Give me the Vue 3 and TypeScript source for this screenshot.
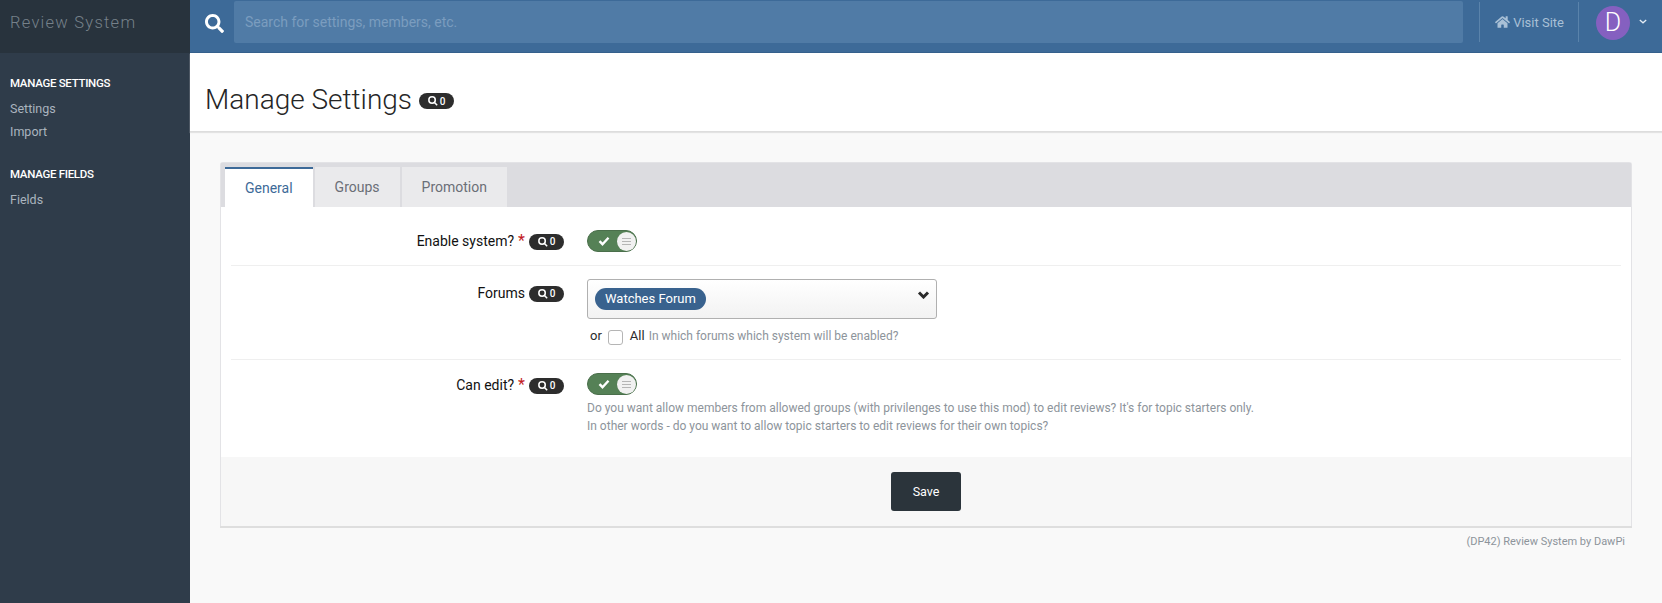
<template>
  <div class="page">
    <aside class="sidebar">
      <div class="brand">Review System</div>
      <nav class="menu">
        <section v-for="group in menu" :key="group.title" class="menu-group">
          <h4>{{ group.title }}</h4>
          <a v-for="link in group.links" :key="link">{{ link }}</a>
        </section>
      </nav>
    </aside>

    <div class="main">
      <header class="topbar">
        <svg class="search-icon" viewBox="0 0 512 512"><path d="M505 442.700L405.300 343c-4.500-4.500-10.600-7-17-7H372c27.600-35.300 44-79.700 44-128C416 93.100 322.900 0 208 0S0 93.100 0 208s93.100 208 208 208c48.300 0 92.700-16.400 128-44v16.300c0 6.400 2.500 12.500 7 17l99.700 99.700c9.400 9.400 24.600 9.400 33.900 0l28.300-28.300c9.400-9.400 9.400-24.600.1-34zM208 336c-70.700 0-128-57.200-128-128 0-70.700 57.200-128 128-128 70.700 0 128 57.200 128 128 0 70.700-57.200 128-128 128z"/></svg>
        <div class="search">Search for settings, members, etc.</div>
        <a class="visit">
          <svg viewBox="0 0 576 512"><path d="M280.400 148.300L96 300.100V464a16 16 0 0 0 16 16l112.100-.3a16 16 0 0 0 15.900-16V368a16 16 0 0 1 16-16h64a16 16 0 0 1 16 16v95.600a16 16 0 0 0 16 16.100L464 480a16 16 0 0 0 16-16V300L295.700 148.300a12.200 12.200 0 0 0-15.300 0zM571.600 251.500L488 182.600V44.100a12 12 0 0 0-12-12h-56a12 12 0 0 0-12 12v72.600L318.500 43a48 48 0 0 0-61 0L4.300 251.500a12 12 0 0 0-1.600 16.900l25.500 31A12 12 0 0 0 45.200 301l235.200-193.700a12.200 12.200 0 0 1 15.300 0L530.900 301a12 12 0 0 0 16.900-1.600l25.500-31a12 12 0 0 0-1.700-16.900z"/></svg>
          Visit Site
        </a>
        <div class="user">
          <span class="avatar">D</span>
          <svg class="caret" viewBox="0 0 10 6"><path d="M1 1l4 3.600L9 1" /></svg>
        </div>
      </header>

      <div class="title-bar">
        <h1>Manage Settings</h1>
        <span class="hits title-hits">
          <svg viewBox="0 0 512 512"><circle cx="208" cy="208" r="165" /><path d="M330 330l140 140" /></svg>0
        </span>
      </div>

      <main class="content">
        <div class="panel">
          <div class="tabs">
            <a v-for="tab in tabs" :key="tab" class="tab" :class="{ active: tab === 'General' }">{{ tab }}</a>
          </div>

          <div class="form">
            <div class="row">
              <div class="label">
                Enable system?
                <span class="req">*</span>
                <span class="hits"><svg viewBox="0 0 512 512"><circle cx="208" cy="208" r="165" /><path d="M330 330l140 140" /></svg>0</span>
              </div>
              <div class="field">
                <div class="toggle">
                  <svg class="check" viewBox="0 0 12 10"><path d="M1.500 5.200l3 3 6-6.400" /></svg>
                  <span class="knob"><i></i></span>
                </div>
              </div>
            </div>

            <div class="row row-forums">
              <div class="label">
                Forums
                <span class="hits"><svg viewBox="0 0 512 512"><circle cx="208" cy="208" r="165" /><path d="M330 330l140 140" /></svg>0</span>
              </div>
              <div class="field">
                <div class="select">
                  <span class="token">Watches Forum</span>
                  <svg class="select-arrow" viewBox="0 0 13 8"><path d="M2 1.500L6.500 6 11 1.500" /></svg>
                </div>
                <div class="unlimited">
                  <span>or</span>
                  <span class="checkbox"></span>
                  <span>All</span>
                  <span class="help">In which forums which system will be enabled?</span>
                </div>
              </div>
            </div>

            <div class="row row-edit">
              <div class="label">
                Can edit?
                <span class="req">*</span>
                <span class="hits"><svg viewBox="0 0 512 512"><circle cx="208" cy="208" r="165" /><path d="M330 330l140 140" /></svg>0</span>
              </div>
              <div class="field">
                <div class="toggle">
                  <svg class="check" viewBox="0 0 12 10"><path d="M1.500 5.200l3 3 6-6.400" /></svg>
                  <span class="knob"><i></i></span>
                </div>
                <p class="help desc">
                  Do you want allow members from allowed groups (with privilenges to use this mod) to edit reviews? It's for topic starters only.<br />
                  In other words - do you want to allow topic starters to edit reviews for their own topics?
                </p>
              </div>
            </div>
          </div>

          <div class="actions">
            <button class="save">Save</button>
          </div>
        </div>
        <div class="credit">(DP42) Review System by DawPi</div>
      </main>
    </div>
  </div>
</template>

<script setup lang="ts">
const menu = [
  { title: "MANAGE SETTINGS", links: ["Settings", "Import"] },
  { title: "MANAGE FIELDS", links: ["Fields"] },
]
const tabs = ["General", "Groups", "Promotion"]
</script>

<style>
html,
body {
  margin: 0;
  height: 100%;
}
</style>

<style scoped>
.page {
  display: flex;
  height: 603px;
  overflow: hidden;
  font-family: Roboto, "Liberation Sans", sans-serif;
  font-size: 13px;
  color: #111;
  background: #f9f9f9;
}

.sidebar {
  width: 190px;
  flex: none;
  background: #2f3c4a;
}
.brand {
  height: 53px;
  box-sizing: border-box;
  padding: 13px 10px 0;
  background: #28333d;
  color: #76818a;
  font-size: 16.500px;
  font-weight: 300;
  letter-spacing: 1.250px;
  line-height: 20px;
}
.menu {
  padding-top: 23px;
}
.menu-group {
  margin-bottom: 24px;
}
.menu-group h4 {
  margin: 0 0 7px;
  padding: 0 10px;
  color: #fff;
  font-size: 11.500px;
  font-weight: 500;
  letter-spacing: -0.300px;
  line-height: 14px;
}
.menu-group a {
  display: block;
  padding: 0 10px;
  color: #aab4bf;
  font-size: 12.500px;
  line-height: 23px;
}

.main {
  flex: 1;
  min-width: 0;
  display: flex;
  flex-direction: column;
}

.topbar {
  height: 53px;
  flex: none;
  box-sizing: border-box;
  padding-bottom: 9px;
  display: flex;
  align-items: center;
  background: #3d6a98;
  box-shadow: inset 0 -1px 0 #35608c;
}
.search-icon {
  width: 19px;
  height: 19px;
  margin: 3px 0 0 15px;
  fill: #fff;
  flex: none;
}
.search {
  flex: 1;
  height: 42px;
  margin: 0 16px 0 10px;
  padding-left: 11px;
  border-radius: 2px;
  background: #507ba6;
  color: #7b9dbf;
  font-size: 14px;
  line-height: 42px;
}
.visit {
  display: flex;
  align-items: center;
  gap: 3px;
  height: 40px;
  padding: 0 14px 0 15px;
  border-left: 1px solid #5a83ab;
  border-right: 1px solid #5a83ab;
  color: #a9c0d6;
  font-size: 13px;
}
.visit svg {
  width: 15px;
  height: 14px;
  fill: #a9c0d6;
}
.user {
  display: flex;
  align-items: center;
  margin-top: 2px;
  padding: 0 15px 0 17px;
}
.avatar {
  width: 34px;
  height: 34px;
  border-radius: 50%;
  background: #8560c0;
  color: #fff;
  font-size: 25px;
  font-weight: 300;
  line-height: 34px;
  text-align: center;
}
.caret {
  width: 8px;
  height: 5px;
  margin: 0 0 3px 9px;
  fill: none;
  stroke: #e5edf5;
  stroke-width: 1.600;
}

.title-bar {
  height: 79px;
  flex: none;
  box-sizing: border-box;
  display: flex;
  align-items: center;
  gap: 7px;
  padding: 14px 0 0 15px;
  background: #fff;
  border-bottom: 1px solid #ddd;
  box-shadow: 0 1px 1px #e3e3e3;
}
.title-bar h1 {
  margin: 0;
  font-size: 28px;
  font-weight: 300;
  color: #262626;
}

.hits {
  display: inline-flex;
  align-items: center;
  justify-content: center;
  gap: 2px;
  width: 35px;
  height: 16px;
  border-radius: 8px;
  background: #2d2d2d;
  color: #fff;
  font-size: 10px;
  font-weight: 500;
}
.hits svg {
  width: 10px;
  height: 10px;
  fill: none;
  stroke: #fff;
  stroke-width: 78;
}
.title-hits {
  margin-top: 4px;
}

.content {
  flex: 1;
  padding: 30px 30px 0;
}
.panel {
  border-radius: 3px 3px 0 0;
  border: 1px solid #e3e3e6;
  border-bottom: 0;
  background: #fff;
  box-shadow: 0 2px 0 #dedede;
}
.tabs {
  display: flex;
  gap: 2px;
  height: 44px;
  box-sizing: border-box;
  padding: 4px 0 0 4px;
  background: #dcdce0;
}
.tab {
  padding: 0 20px;
  line-height: 41px;
  height: 40px;
  font-size: 14px;
  color: #6a6f77;
  background: #eaeaec;
}
.tab.active {
  box-sizing: border-box;
  line-height: 39px;
  color: #3d6a98;
  background: #fff;
  border-top: 2px solid #3d6a98;
}

.form {
  padding: 0 10px;
}
.row {
  display: flex;
  gap: 23px;
  box-sizing: border-box;
  height: 59px;
  padding-top: 23px;
  border-bottom: 1px solid #efefef;
}
.row-forums {
  height: 94px;
  padding-top: 13px;
}
.row-edit {
  height: 97px;
  padding-top: 13px;
  border-bottom: 0;
}
.label {
  width: 333px;
  flex: none;
  box-sizing: border-box;
  padding-top: 3px;
  display: flex;
  align-items: flex-start;
  justify-content: flex-end;
  gap: 4px;
  font-size: 14px;
  line-height: 16px;
}
.label .hits {
  margin-top: 1px;
}
.row-forums .label {
  padding-top: 6px;
}
.row-edit .label {
  padding-top: 4px;
}
.req {
  color: #c21d24;
  font-size: 16px;
  line-height: 16px;
}
.field {
  flex: 1;
}

.toggle {
  position: relative;
  width: 50px;
  height: 22px;
  box-sizing: border-box;
  border-radius: 11px;
  background: #558156;
  border: 1px solid #4a6f4b;
}
.check {
  position: absolute;
  left: 10px;
  top: 5px;
  width: 12px;
  height: 10px;
  fill: none;
  stroke: #fff;
  stroke-width: 2.400;
}
.knob {
  position: absolute;
  right: 0;
  top: 1px;
  width: 19px;
  height: 19px;
  border-radius: 50%;
  background: #f1f1f1;
  display: flex;
  align-items: center;
  justify-content: center;
}
.knob i {
  display: block;
  width: 9px;
  height: 7px;
  background: repeating-linear-gradient(#b5b5b5 0 1px, transparent 1px 3px);
}

.select {
  position: relative;
  width: 350px;
  height: 40px;
  box-sizing: border-box;
  display: flex;
  align-items: center;
  padding-left: 7px;
  border: 1px solid #b0b0b0;
  border-radius: 3px;
  background: linear-gradient(#fff, #f2f2f2);
}
.token {
  height: 22px;
  padding: 0 10px;
  border-radius: 11px;
  background: #39628e;
  color: #fff;
  font-size: 13px;
  line-height: 22px;
}
.select-arrow {
  position: absolute;
  right: 6px;
  top: 11px;
  width: 13px;
  height: 8px;
  fill: none;
  stroke: #2b2b2b;
  stroke-width: 3;
}
.unlimited {
  display: flex;
  align-items: center;
  gap: 6px;
  margin-top: 8px;
  padding-left: 3px;
  color: #2b2b2b;
  font-size: 13px;
  line-height: 18px;
}
.unlimited > span:nth-child(2) {
  margin-right: 1px;
}
.checkbox {
  width: 13px;
  height: 13px;
  border: 1px solid #b5b5b5;
  border-radius: 3px;
  background: #fff;
  margin-top: 2px;
}
.help {
  color: #8d949b;
  font-size: 12px;
  margin-left: -2px;
}
.desc {
  margin: 4px 0 0 0;
  line-height: 18px;
}

.actions {
  display: flex;
  justify-content: center;
  height: 69px;
  box-sizing: border-box;
  padding-top: 15px;
  background: #f7f7f7;
}
.save {
  width: 70px;
  height: 39px;
  border: 0;
  border-radius: 3px;
  background: #2b343b;
  color: #fff;
  font-family: inherit;
  font-size: 12.500px;
}

.credit {
  margin-top: 9px;
  padding-right: 7px;
  text-align: right;
  color: #8d949b;
  font-size: 11px;
  line-height: 14px;
}
</style>
